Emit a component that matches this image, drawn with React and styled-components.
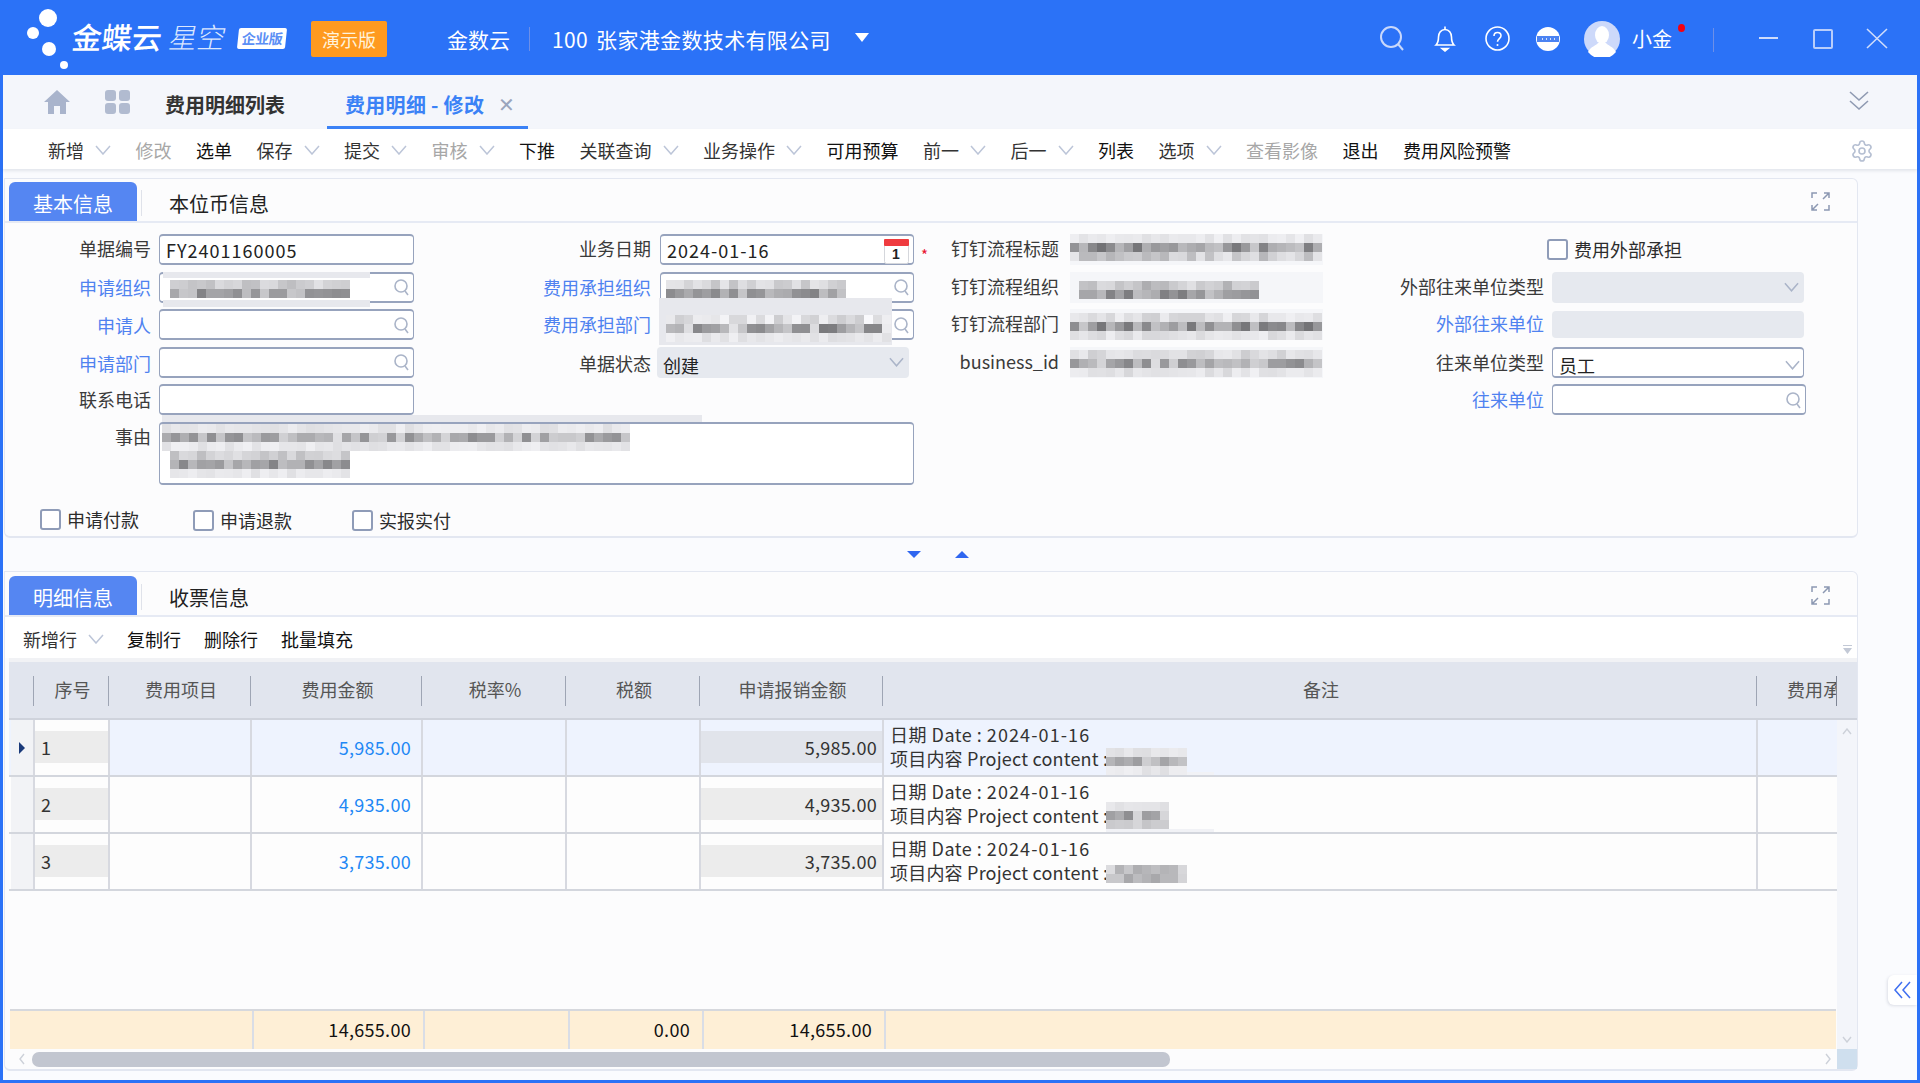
import React from 'react';
import styled, { createGlobalStyle } from 'styled-components';
import { Settings } from 'lucide-react';

const GlobalStyle = createGlobalStyle`
  html, body { margin: 0; padding: 0; background: #2b72f7; }
  * { box-sizing: border-box; }
  body { font-family: "Noto Sans CJK SC", "Noto Sans", sans-serif; }
`;

const TABLE_COLS = '24px 75px 142px 171px 144px 134px 183px 874px 81px';

const Frame = styled.div`
  width: 1920px;
  height: 1083px;
  background: #2b72f7;
  display: flex;
  flex-direction: column;
  overflow: hidden;
  position: relative;
`;

/* top bar */
const TopBar = styled.header`
  height: 75px;
  flex: none;
  display: flex;
  align-items: center;
  color: #fff;
  padding-right: 32px;
`;
const LogoDots = styled.svg`
  width: 72px;
  height: 75px;
  flex: none;
`;
const LogoName = styled.span`
  font-size: 30px;
  font-weight: 500;
  line-height: 1;
  width: 98px;
  margin-top: -3px;
  transform: skewX(-6deg);
  white-space: nowrap;
`;
const LogoSub = styled.span`
  font-size: 28px;
  font-weight: 300;
  line-height: 1;
  width: 68px;
  color: #dbe7ff;
  margin-top: -3px;
  transform: skewX(-12deg);
  white-space: nowrap;
`;
const LogoBadge = styled.span`
  width: 48px;
  height: 21px;
  margin-top: 2px;
  background: #fff;
  color: #5c8ff5;
  font-size: 14px;
  font-weight: 700;
  line-height: 21px;
  text-align: center;
  border-radius: 2px;
  transform: skewX(-6deg);
  white-space: nowrap;
  letter-spacing: -0.5px;
`;
const DemoTag = styled.span`
  width: 76px;
  height: 36px;
  margin-left: 25px;
  margin-top: 2px;
  background: #ff9a1f;
  color: #fff3dc;
  border-radius: 2px;
  font-size: 18px;
  line-height: 36px;
  text-align: center;
`;
const OrgName = styled.span`
  font-size: 21px;
  margin-left: 60px;
  margin-top: 2px;
  white-space: nowrap;
`;
const BarDivider = styled.span`
  width: 1px;
  height: 24px;
  background: #6d8fe8;
  margin: 2px ${p => p.$right || 22}px 0 ${p => p.$left || 19}px;
  flex: none;
`;
const Company = styled.span`
  font-size: 21px;
  margin-top: 2px;
  white-space: nowrap;
  word-spacing: 3px;
  letter-spacing: 0.35px;
`;
const Caret = styled.span`
  width: 0;
  height: 0;
  margin-left: 24px;
  border: 7px solid transparent;
  border-top: 9px solid #fff;
  border-bottom: 0;
`;
const BarRight = styled.div`
  margin-left: auto;
  margin-top: 2px;
  display: flex;
  align-items: center;
`;
const BarIcon = styled.svg`
  display: block;
  flex: none;
  margin-left: ${p => p.$left || 0}px;
`;
const UserName = styled.span`
  font-size: 20px;
  margin-left: 12px;
  position: relative;
  white-space: nowrap;
  &::after {
    content: '';
    position: absolute;
    right: -13px;
    top: 0;
    width: 7px;
    height: 8px;
    border-radius: 50%;
    background: #f5000f;
  }
`;

/* main sheet */
const Sheet = styled.div`
  flex: 1;
  margin: 0 3px 3px;
  background: #fafbfe;
  display: flex;
  flex-direction: column;
  min-height: 0;
`;
const TabBar = styled.nav`
  height: 54px;
  flex: none;
  background: #f4f6fb;
  display: flex;
  align-items: stretch;
  padding-left: 41px;
  padding-right: 48px;
`;
const NavIcon = styled.svg`
  align-self: center;
  flex: none;
  margin-right: ${p => p.$right}px;
`;
const PageTab = styled.div`
  display: flex;
  align-items: center;
  font-size: 20px;
  font-weight: 700;
  white-space: nowrap;
  padding-top: 5px;
  color: ${p => (p.$active ? '#3b82f6' : '#333')};
  ${p => p.$active && `
    margin-left: 42px;
    width: 201px;
    padding-left: 18px;
    padding-top: 7px;
    border-bottom: 3px solid #3b82f6;
    gap: 14px;
    letter-spacing: 0.3px;
  `}
`;
const TabClose = styled.span`
  color: #9aa5bd;
  font-size: 20px;
  font-weight: 400;
  line-height: 1;
`;
const CollapseIcon = styled.svg`
  margin-left: auto;
  margin-top: -2px;
  align-self: center;
`;

const ActionBar = styled.div`
  height: 40px;
  flex: none;
  background: #fff;
  display: flex;
  align-items: center;
  gap: 24.5px;
  padding: 2px 43px 0 45px;
  box-shadow: 0 2px 3px rgba(60, 70, 100, 0.12);
  position: relative;
`;
const Action = styled.span`
  display: flex;
  align-items: center;
  gap: 11px;
  font-size: 18px;
  line-height: 24px;
  white-space: nowrap;
  color: ${p => (p.$off ? '#a7a7a7' : p.$menu ? '#333' : '#111')};
`;
const GearIcon = styled(Settings)`
  margin-left: auto;
  margin-top: 2px;
  color: #b5bfd2;
`;

const Content = styled.main`
  flex: 1;
  padding: 9px 0 0 1px;
  min-height: 0;
`;
const Panel = styled.section`
  width: 1854px;
  height: ${p => p.$height}px;
  background: #fcfcfd;
  border: 1px solid #e3e7f1;
  border-bottom-width: 2px;
  border-radius: 0 6px 6px 6px;
  padding-top: ${p => p.$top || 3}px;
  display: flex;
  flex-direction: column;
`;
const TabStrip = styled.div`
  height: 41px;
  flex: none;
  border-bottom: 2px solid #e6eaf4;
  display: flex;
  align-items: stretch;
  padding-left: 4px;
  padding-right: 27px;
`;
const SectionTab = styled.div`
  width: ${p => (p.$active ? '128px' : 'auto')};
  background: ${p => (p.$active ? '#5586f2' : 'transparent')};
  color: ${p => (p.$active ? '#fff' : '#222')};
  border-radius: 6px 6px 0 0;
  font-size: 20px;
  line-height: 44px;
  text-align: center;
  white-space: nowrap;
  ${p => !p.$active && `
    margin: 0 0 0 4px;
    padding-left: 28px;
    position: relative;
    &::before {
      content: '';
      position: absolute;
      left: 0;
      top: 8px;
      width: 1px;
      height: 26px;
      background: #dfe2ea;
    }
  `}
`;
const ExpandIcon = styled.svg`
  margin-left: auto;
  align-self: center;
`;

/* form */
const FormArea = styled.div`
  display: flex;
  align-items: flex-start;
  margin-top: 11px;
  height: 249px;
`;
const FormColumn = styled.div`
  display: grid;
  flex: none;
  width: ${p => p.$width}px;
  grid-template-columns: ${p => p.$label}px ${p => p.$box}px;
  column-gap: ${p => p.$gap}px;
  row-gap: 6.5px;
`;
const Label = styled.label`
  font-size: 18px;
  line-height: 31px;
  text-align: right;
  white-space: nowrap;
  color: ${p => (p.$link ? '#4f82f0' : '#3a3a3a')};
  transform: translateY(${p => p.$shift || 0}px);
`;
const Box = styled.div`
  position: relative;
  height: ${p => p.$height || 31}px;
  width: ${p => (p.$width ? `${p.$width}px` : 'auto')};
  background: #fff;
  border: 1px solid #97a3bd;
  border-top-width: 2px;
  border-bottom-width: 2px;
  border-radius: 4px;
  padding-left: 6px;
  font-size: 18px;
  line-height: 28px;
  color: #222;
  letter-spacing: 1px;
  display: flex;
  align-items: center;
  justify-content: space-between;
`;
const FlatBox = styled.div`
  height: ${p => p.$height || 31}px;
  margin-top: ${p => p.$shift || 0}px;
  margin-left: ${p => p.$left || 0}px;
  margin-right: ${p => p.$tail || 0}px;
  background: #e6e9ef;
  border-radius: 4px;
  padding: 0 5px 0 6px;
  font-size: 18px;
  color: #222;
  display: flex;
  align-items: center;
  justify-content: space-between;
`;
const LowText = styled.span`
  padding-top: 5px;
  letter-spacing: 0;
`;
const FieldIcon = styled.svg`
  flex: none;
  margin-left: auto;
  margin-right: ${p => p.$right || 3}px;
  margin-top: ${p => p.$down || 0}px;
`;
const Star = styled.span`
  position: absolute;
  right: -16px;
  top: 5px;
  color: #e8112d;
  font-size: 15px;
`;
const Blur = styled.svg`
  position: absolute;
  left: ${p => p.$x}px;
  top: ${p => p.$y}px;
  display: block;
  pointer-events: none;
`;
const Halo = styled.span`
  position: absolute;
  left: ${p => p.$x}px;
  top: ${p => p.$y}px;
  width: ${p => p.$w}px;
  height: ${p => p.$h}px;
  background: ${p => p.$color || '#e7e8ed'};
  pointer-events: none;
`;
const BlurValue = styled.div`
  position: relative;
  height: 31px;
  background: #f5f6f9;
`;
const CheckRow = styled.div`
  display: grid;
  grid-template-columns: 153px 159px auto;
  padding-left: 35px;
  margin-top: 25px;
`;
const CheckItem = styled.span`
  display: flex;
  align-items: center;
  gap: 6px;
  font-size: 18px;
  line-height: 21px;
  color: #2c2c2c;
  white-space: nowrap;
  margin-top: ${p => p.$shift || 0}px;
  ${p => p.$span && `
    grid-column: 1 / -1;
    padding-left: 224px;
    height: 31px;
  `}
`;
const CheckBoxMark = styled.span`
  width: 21px;
  height: 21px;
  flex: none;
  background: #fff;
  border: 2px solid #8f9cb8;
  border-radius: 3px;
`;
const Splitter = styled.div`
  height: 33px;
  display: flex;
  align-items: center;
  gap: 34px;
  padding-left: 903px;
`;
const SplitArrow = styled.span`
  width: 0;
  height: 0;
  border-left: 7px solid transparent;
  border-right: 7px solid transparent;
  ${p => (p.$up ? 'border-bottom: 7px solid #2f66f0;' : 'border-top: 7px solid #2f66f0;')}
`;

/* table */
const GridTools = styled.div`
  height: 41px;
  flex: none;
  background: #fff;
  display: flex;
  align-items: center;
  gap: 23px;
  padding: 2px 0 0 18px;
  position: relative;
`;
const ToolsHandle = styled.svg`
  position: absolute;
  right: 5px;
  bottom: 4px;
`;
const HeadRow = styled.div`
  flex: none;
  height: 62px;
  margin-left: 4px;
  border-top: 4px solid #f1f2f5;
  border-bottom: 2px solid #cfd3dc;
  background: #e1e5ee;
  display: grid;
  grid-template-columns: ${TABLE_COLS};
`;
const HeadCell = styled.div`
  position: relative;
  font-size: 18px;
  color: #555;
  line-height: 54px;
  text-align: center;
  padding-left: 4px;
  white-space: nowrap;
  overflow: hidden;
  ${p => p.$clip && 'text-align: left; padding-left: 31px;'}
  &::before {
    content: '';
    position: absolute;
    left: 0;
    top: 14px;
    width: 1px;
    height: 30px;
    background: ${p => (p.$first ? 'transparent' : '#9ea5b4')};
  }
  &::after {
    content: '';
    position: absolute;
    right: 0;
    top: 14px;
    width: 1px;
    height: 30px;
    background: ${p => (p.$clip ? '#7f8695' : 'transparent')};
  }
`;
const GridBody = styled.div`
  flex: 1;
  display: flex;
  margin-left: 4px;
  min-height: 0;
`;
const RowsArea = styled.div`
  width: 1828px;
  display: flex;
  flex-direction: column;
`;
const Row = styled.div`
  height: 57px;
  flex: none;
  display: grid;
  grid-template-columns: ${TABLE_COLS};
  border-bottom: 2px solid #d3d6dd;
  background: ${p => (p.$selected ? '#eef3fe' : '#fdfdfd')};
`;
const Handle = styled.div`
  margin-left: 2px;
  background: #f2f3f6;
  display: flex;
  align-items: center;
  padding-left: 8px;
`;
const SelectedMark = styled.span`
  width: 0;
  height: 0;
  border-top: 6px solid transparent;
  border-bottom: 6px solid transparent;
  border-left: 6px solid #1a3a7a;
`;
const Cell = styled.div`
  border-left: 2px solid #d7d9e0;
  font-size: 18px;
  line-height: 24px;
  color: #333;
  background: ${p => (p.$white ? '#fdfdfd' : 'transparent')};
  position: relative;
  white-space: nowrap;
`;
const Band = styled.div`
  margin-top: 11px;
  height: 32px;
  line-height: 32px;
  background: ${p => (p.$selected ? '#e1e4eb' : '#ececec')};
  padding: 0 5px 0 6px;
  letter-spacing: 0.3px;
  text-align: ${p => (p.$right ? 'right' : 'left')};
`;
const Amount = styled.div`
  text-align: right;
  color: #1e88f5;
  padding: 15px 10px 0 0;
  letter-spacing: 0.3px;
`;
const Remark = styled.div`
  padding: 2px 0 0 6px;
  letter-spacing: 0.2px;
`;
const DateLine = styled.span`
  letter-spacing: 0.5px;
`;
const DateText = styled.span`
  letter-spacing: 1.1px;
`;
const Spacer = styled.div`
  flex: 1;
`;
const SumRow = styled.div`
  flex: none;
  height: 40px;
  margin-left: 1px;
  width: 1826px;
  border-top: 2px solid #d6d8dd;
  background: #feefd6;
  display: grid;
  grid-template-columns: 242px 171px 145px 134px 182px 1fr;
`;
const SumCell = styled.div`
  border-left: ${p => (p.$first ? 0 : '2px solid #d9dde6')};
  text-align: right;
  font-size: 18px;
  line-height: 36px;
  color: #111;
  padding-right: ${p => p.$pad || 12}px;
  letter-spacing: 0.3px;
`;
const VScroll = styled.div`
  flex: 1;
  background: #f3f5fa;
  display: flex;
  flex-direction: column;
  justify-content: space-between;
  align-items: center;
  padding: 8px 0 6px;
`;
const HScroll = styled.div`
  flex: none;
  height: 20px;
  margin-left: 6px;
  display: flex;
  align-items: center;
`;
const ScrollArrow = styled.svg`
  flex: none;
`;
const ScrollThumb = styled.div`
  width: 1138px;
  height: 15px;
  background: #c2c6d0;
  border-radius: 7px;
`;
const ScrollCorner = styled.div`
  width: 20px;
  height: 20px;
  margin-left: 5px;
  background: #cfdfee;
`;
const SideTab = styled.div`
  position: absolute;
  right: 3px;
  top: 975px;
  width: 29px;
  height: 30px;
  background: #fff;
  border-radius: 6px 0 0 6px;
  box-shadow: -1px 1px 3px rgba(60, 70, 100, 0.15);
  display: flex;
  align-items: center;
  justify-content: center;
`;

/* a pixelated redaction block; tones are [min, max] per row */
const Mosaic = ({ x = 0, y = 0, cols, tones, seed = 1, cell = 9 }) => {
  const rects = [];
  let s = seed * 7919;
  tones.forEach((tone, r) => {
    for (let c = 0; c < cols; c++) {
      s = (s * 1103515245 + 12345) & 0x7fffffff;
      const g = Math.round(tone[0] + ((s >> 8) % 100) / 100 * (tone[1] - tone[0]));
      rects.push(<rect key={`${r}-${c}`} x={c * cell} y={r * cell} width={cell} height={cell} fill={`rgb(${g},${g},${g + 3})`} />);
    }
  });
  return (
    <Blur $x={x} $y={y} width={cols * cell} height={tones.length * cell}>
      {rects}
    </Blur>
  );
};

const PALE = [222, 240];
const MID = [190, 225];
const DARK = [130, 200];

const SearchGlyph = () => (
  <FieldIcon width="16" height="18" viewBox="0 0 16 18" fill="none" stroke="#aab4c8" strokeWidth="1.6">
    <circle cx="7" cy="8" r="6" />
    <path d="M11 13l3 4" />
  </FieldIcon>
);
const Chevron = ({ color = '#bcc5d8', w = 16 }) => (
  <svg width={w} height="10" viewBox="0 0 16 10" fill="none" stroke={color} strokeWidth="1.5">
    <path d="M1 1l7 8 7-8" />
  </svg>
);
const SelectChevron = () => (
  <svg width="15" height="10" viewBox="0 0 16 10" fill="none" stroke="#aab4c8" strokeWidth="1.6">
    <path d="M1 1l7 8 7-8" />
  </svg>
);
const Expand = () => (
  <ExpandIcon width="19" height="19" viewBox="0 0 19 19" fill="none" stroke="#8c98b2" strokeWidth="1.5">
    <path d="M1 6V1h5M18 1l-6 6M13 1h5v5M1 18l6-6M1 13v5h5M18 13v5h-5" />
  </ExpandIcon>
);
const Calendar = () => (
  <FieldIcon $right={4} $down={4} width="25" height="25" viewBox="0 0 25 25">
    <rect x="0.5" y="0.5" width="24" height="24" rx="2" fill="#fff" stroke="#d5d7dc" />
    <rect x="0" y="0" width="25" height="7" rx="1" fill="#ef3b3f" />
    <text x="12.5" y="20" fontSize="14" fontWeight="700" textAnchor="middle" fill="#222" fontFamily="Liberation Sans, sans-serif">1</text>
  </FieldIcon>
);

const actions = [
  { text: '新增', menu: true },
  { text: '修改', off: true },
  { text: '选单' },
  { text: '保存', menu: true },
  { text: '提交', menu: true },
  { text: '审核', menu: true, off: true },
  { text: '下推' },
  { text: '关联查询', menu: true },
  { text: '业务操作', menu: true },
  { text: '可用预算' },
  { text: '前一', menu: true },
  { text: '后一', menu: true },
  { text: '列表' },
  { text: '选项', menu: true },
  { text: '查看影像', off: true },
  { text: '退出' },
  { text: '费用风险预警' },
];

const rows = [
  { no: 1, amount: '5,985.00', blur: { cols: 9, tones: [PALE, [150, 215], PALE], y: 28 }, selected: true, halo: 108 },
  { no: 2, amount: '4,935.00', blur: { cols: 7, tones: [PALE, [140, 215], MID], y: 25 }, halo: 108 },
  { no: 3, amount: '3,735.00', blur: { cols: 9, tones: [[170, 225], [165, 230]], y: 31 }, halo: 0 },
];

const heads = ['费用项目', '费用金额', '税率%', '税额', '申请报销金额', '备注'];

const App = () => (
  <Frame>
    <GlobalStyle />
    <TopBar>
      <LogoDots viewBox="0 0 72 75">
        <circle cx="48" cy="18" r="9" fill="#fff" />
        <circle cx="33" cy="33" r="6" fill="#fff" />
        <circle cx="49" cy="49" r="7" fill="#fff" />
        <circle cx="64" cy="65" r="4" fill="#fff" />
      </LogoDots>
      <LogoName>金蝶云</LogoName>
      <LogoSub>星空</LogoSub>
      <LogoBadge>企业版</LogoBadge>
      <DemoTag>演示版</DemoTag>
      <OrgName>金数云</OrgName>
      <BarDivider />
      <Company>100 张家港金数技术有限公司</Company>
      <Caret />
      <BarRight>
        <BarIcon width="26" height="25" viewBox="0 0 26 25" fill="none" stroke="#c9d8fb" strokeWidth="2">
          <circle cx="12" cy="11" r="10" />
          <path d="M19 18l5 6" />
        </BarIcon>
        <BarIcon $left={28} width="24" height="27" viewBox="0 0 24 27" fill="none" stroke="#fff" strokeWidth="1.6">
          <path d="M3 20c2-2 2.5-4 2.5-8 0-4 2.5-7.500 6.500-7.500s6.500 3.500 6.500 7.500c0 4 .5 6 2.500 8z" />
          <path d="M12 1.500v3" />
          <path d="M9 23.500h6l-3 2.500z" fill="#fff" />
        </BarIcon>
        <BarIcon $left={28} width="25" height="25" viewBox="0 0 25 25" fill="none" stroke="#fff" strokeWidth="1.6">
          <circle cx="12.500" cy="12.500" r="11.500" />
          <path d="M9 10c0-2 1.500-3.500 3.500-3.500s3.500 1.500 3.500 3.300c0 2.700-3.500 3-3.500 6" />
          <circle cx="12.500" cy="19" r="1" fill="#fff" stroke="none" />
        </BarIcon>
        <BarIcon $left={26} width="24" height="24" viewBox="0 0 24 24">
          <circle cx="12" cy="12" r="12" fill="#fff" />
          <rect x="1" y="9" width="22" height="6" fill="#4b83f2" />
          <path d="M6 12h1M10 12h1M14 12h1M18 12h1" stroke="#fff" strokeWidth="1.6" />
        </BarIcon>
        <BarIcon $left={24} width="36" height="36" viewBox="0 0 36 36">
          <circle cx="18" cy="18" r="18" fill="#cdd9fa" />
          <ellipse cx="18" cy="14" rx="7" ry="9" fill="#fff" />
          <path d="M4 31c3-6 8-6 10-9h8c2 3 7 3 10 9a18 18 0 0 1-28 0z" fill="#fff" />
        </BarIcon>
        <UserName>小金</UserName>
        <BarDivider $left={41} $right={45} />
        <BarIcon width="20" height="20" viewBox="0 0 20 20" stroke="#cfdcfb" strokeWidth="2">
          <path d="M0 9h19" />
        </BarIcon>
        <BarIcon $left={34} width="20" height="20" viewBox="0 0 20 20" fill="none" stroke="#b9cdfb" strokeWidth="2">
          <rect x="1" y="1" width="18" height="18" rx="1" />
        </BarIcon>
        <BarIcon $left={33} width="22" height="21" viewBox="0 0 22 21" fill="none" stroke="#cfdcfb" strokeWidth="1.6">
          <path d="M1 1l20 19M21 1L1 20" />
        </BarIcon>
      </BarRight>
    </TopBar>

    <Sheet>
      <TabBar>
        <NavIcon $right={35} width="26" height="24" viewBox="0 0 26 24" fill="#a9b4cc">
          <path d="M13 0L0 12h4v12h6v-8h6v8h6V12h4z" />
        </NavIcon>
        <NavIcon $right={35} width="25" height="24" viewBox="0 0 25 24" fill="#b1bbd0">
          <rect x="0" y="0" width="11" height="11" rx="3" />
          <rect x="14" y="0" width="11" height="11" rx="3" />
          <rect x="0" y="13" width="11" height="11" rx="3" />
          <rect x="14" y="13" width="11" height="11" rx="3" />
        </NavIcon>
        <PageTab>费用明细列表</PageTab>
        <PageTab $active>
          费用明细 - 修改
          <TabClose>✕</TabClose>
        </PageTab>
        <CollapseIcon width="20" height="20" viewBox="0 0 20 20" fill="none" stroke="#8f9ab2" strokeWidth="1.6">
          <path d="M1 1l9 8 9-8M1 10l9 8 9-8" />
        </CollapseIcon>
      </TabBar>

      <ActionBar>
        {actions.map(a => (
          <Action key={a.text} $off={a.off} $menu={a.menu}>
            {a.text}
            {a.menu && <Chevron />}
          </Action>
        ))}
        <GearIcon size={24} strokeWidth={1.6} />
      </ActionBar>

      <Content>
        <Panel $height={360}>
          <TabStrip>
            <SectionTab $active>基本信息</SectionTab>
            <SectionTab>本位币信息</SectionTab>
            <Expand />
          </TabStrip>
          <FormArea>
            <FormColumn $width={409} $label={146} $box={255} $gap={8}>
              <Label $shift={-1}>单据编号</Label>
              <Box>FY2401160005</Box>
              <Label $link>申请组织</Label>
              <Box>
                <Halo $x={3} $y={-2} $w={207} $h={6} />
                <Halo $x={3} $y={26} $w={207} $h={7} />
                <Mosaic x={10} y={6} cols={20} seed={3} tones={[[190, 225], DARK]} />
                <SearchGlyph />
              </Box>
              <Label $link $shift={1}>申请人</Label>
              <Box><SearchGlyph /></Box>
              <Label $link $shift={1}>申请部门</Label>
              <Box><SearchGlyph /></Box>
              <Label>联系电话</Label>
              <Box />
              <Label $shift={-1}>事由</Label>
              <Box $height={63} $width={755}>
                <Halo $x={2} $y={-9} $w={540} $h={7} />
                <Mosaic x={2} y={0} cols={52} seed={5} tones={[PALE, [140, 225], PALE]} />
                <Mosaic x={10} y={27} cols={20} seed={8} tones={[MID, DARK, PALE]} />
              </Box>
            </FormColumn>
            <FormColumn $width={500} $label={237} $box={254} $gap={9}>
              <Label $shift={-1}>业务日期</Label>
              <Box>
                2024-01-16
                <Calendar />
                <Star>*</Star>
              </Box>
              <Label $link>费用承担组织</Label>
              <Box>
                <Mosaic x={5} y={6} cols={20} seed={11} tones={[[190, 230], DARK]} />
                <SearchGlyph />
              </Box>
              <Label $link>费用承担部门</Label>
              <Box>
                <Halo $x={-2} $y={-13} $w={233} $h={47} />
                <Mosaic x={5} y={4} cols={25} seed={13} tones={[[205, 250], [120, 240], PALE]} />
                <SearchGlyph />
              </Box>
              <Label $shift={1}>单据状态</Label>
              <FlatBox $left={-3} $tail={5}>
                <LowText>创建</LowText>
                <SelectChevron />
              </FlatBox>
            </FormColumn>
            <FormColumn $width={409} $label={145} $box={253} $gap={11}>
              <Label $shift={-1}>钉钉流程标题</Label>
              <BlurValue><Mosaic cols={28} seed={17} tones={[[222, 240], [110, 200], [180, 235]]} /></BlurValue>
              <Label $shift={-1}>钉钉流程组织</Label>
              <BlurValue><Mosaic x={9} y={9} cols={20} seed={19} tones={[[165, 225], [120, 200]]} /></BlurValue>
              <Label $shift={-1}>钉钉流程部门</Label>
              <BlurValue><Mosaic y={4} cols={28} seed={23} tones={[[205, 240], [110, 210], [215, 240]]} /></BlurValue>
              <Label $shift={-1}>business_id</Label>
              <BlurValue><Mosaic y={3} cols={28} seed={29} tones={[[205, 235], [135, 225], [215, 240]]} /></BlurValue>
            </FormColumn>
            <FormColumn $width={485} $label={221} $box={252} $gap={8}>
              <CheckItem $span><CheckBoxMark />费用外部承担</CheckItem>
              <Label $shift={-1}>外部往来单位类型</Label>
              <FlatBox><span /><SelectChevron /></FlatBox>
              <Label $link $shift={-1}>外部往来单位</Label>
              <FlatBox $height={27} $shift={2} />
              <Label>往来单位类型</Label>
              <Box><LowText>员工</LowText><FieldIcon $right={3} as="span"><SelectChevron /></FieldIcon></Box>
              <Label $link>往来单位</Label>
              <Box $width={254}><SearchGlyph /></Box>
            </FormColumn>
          </FormArea>
          <CheckRow>
            <CheckItem><CheckBoxMark />申请付款</CheckItem>
            <CheckItem $shift={2}><CheckBoxMark />申请退款</CheckItem>
            <CheckItem $shift={2}><CheckBoxMark />实报实付</CheckItem>
          </CheckRow>
        </Panel>

        <Splitter>
          <SplitArrow />
          <SplitArrow $up />
        </Splitter>

        <Panel $height={500} $top={4}>
          <TabStrip>
            <SectionTab $active>明细信息</SectionTab>
            <SectionTab>收票信息</SectionTab>
            <Expand />
          </TabStrip>
          <GridTools>
            <Action $menu>新增行<Chevron /></Action>
            <Action>复制行</Action>
            <Action>删除行</Action>
            <Action>批量填充</Action>
            <ToolsHandle width="9" height="9" viewBox="0 0 9 9" fill="#c3c9d6">
              <path d="M0 0h9v1H0zM0 3h9L4.500 9z" />
            </ToolsHandle>
          </GridTools>
          <HeadRow>
            <HeadCell $first />
            <HeadCell>序号</HeadCell>
            {heads.map(h => <HeadCell key={h}>{h}</HeadCell>)}
            <HeadCell $clip>费用承担组织</HeadCell>
          </HeadRow>
          <GridBody>
            <RowsArea>
              {rows.map(r => (
                <Row key={r.no} $selected={r.selected}>
                  <Handle>{r.selected && <SelectedMark />}</Handle>
                  <Cell $white><Band>{r.no}</Band></Cell>
                  <Cell />
                  <Cell><Amount>{r.amount}</Amount></Cell>
                  <Cell />
                  <Cell />
                  <Cell><Band $right $selected={r.selected}>{r.amount}</Band></Cell>
                  <Cell>
                    <Remark>
                      <DateLine>日期 Date : <DateText>2024-01-16</DateText></DateLine>
                      <br />
                      项目内容 Project content :
                    </Remark>
                    {r.halo > 0 && <Halo $x={222} $y={52} $w={r.halo} $h={3} $color="#f1f2f6" />}
                    <Mosaic x={222} y={r.blur.y} cols={r.blur.cols} seed={r.no + 30} tones={r.blur.tones} />
                  </Cell>
                  <Cell />
                </Row>
              ))}
              <Spacer />
              <SumRow>
                <SumCell $first />
                <SumCell>14,655.00</SumCell>
                <SumCell />
                <SumCell>0.00</SumCell>
                <SumCell>14,655.00</SumCell>
                <SumCell />
              </SumRow>
            </RowsArea>
            <VScroll>
              <ScrollArrow width="10" height="7" viewBox="0 0 10 7" fill="none" stroke="#cdd1d9" strokeWidth="1.4">
                <path d="M1 6l4-5 4 5" />
              </ScrollArrow>
              <ScrollArrow width="10" height="7" viewBox="0 0 10 7" fill="none" stroke="#cdd1d9" strokeWidth="1.4">
                <path d="M1 1l4 5 4-5" />
              </ScrollArrow>
            </VScroll>
          </GridBody>
          <HScroll>
            <ScrollArrow width="21" height="12" viewBox="0 0 21 12" fill="none" stroke="#cdd1d9" strokeWidth="1.4">
              <path d="M13 1l-4 5 4 5" />
            </ScrollArrow>
            <ScrollThumb />
            <Spacer />
            <ScrollArrow width="8" height="12" viewBox="0 0 8 12" fill="none" stroke="#cdd1d9" strokeWidth="1.4">
              <path d="M2 1l4 5-4 5" />
            </ScrollArrow>
            <ScrollCorner />
          </HScroll>
        </Panel>
      </Content>
    </Sheet>

    <SideTab>
      <svg width="19" height="18" viewBox="0 0 19 18" fill="none" stroke="#3f6ff0" strokeWidth="1.5">
        <path d="M9 1L2 9l7 8M17 1l-7 8 7 8" />
      </svg>
    </SideTab>
  </Frame>
);

export default App;
